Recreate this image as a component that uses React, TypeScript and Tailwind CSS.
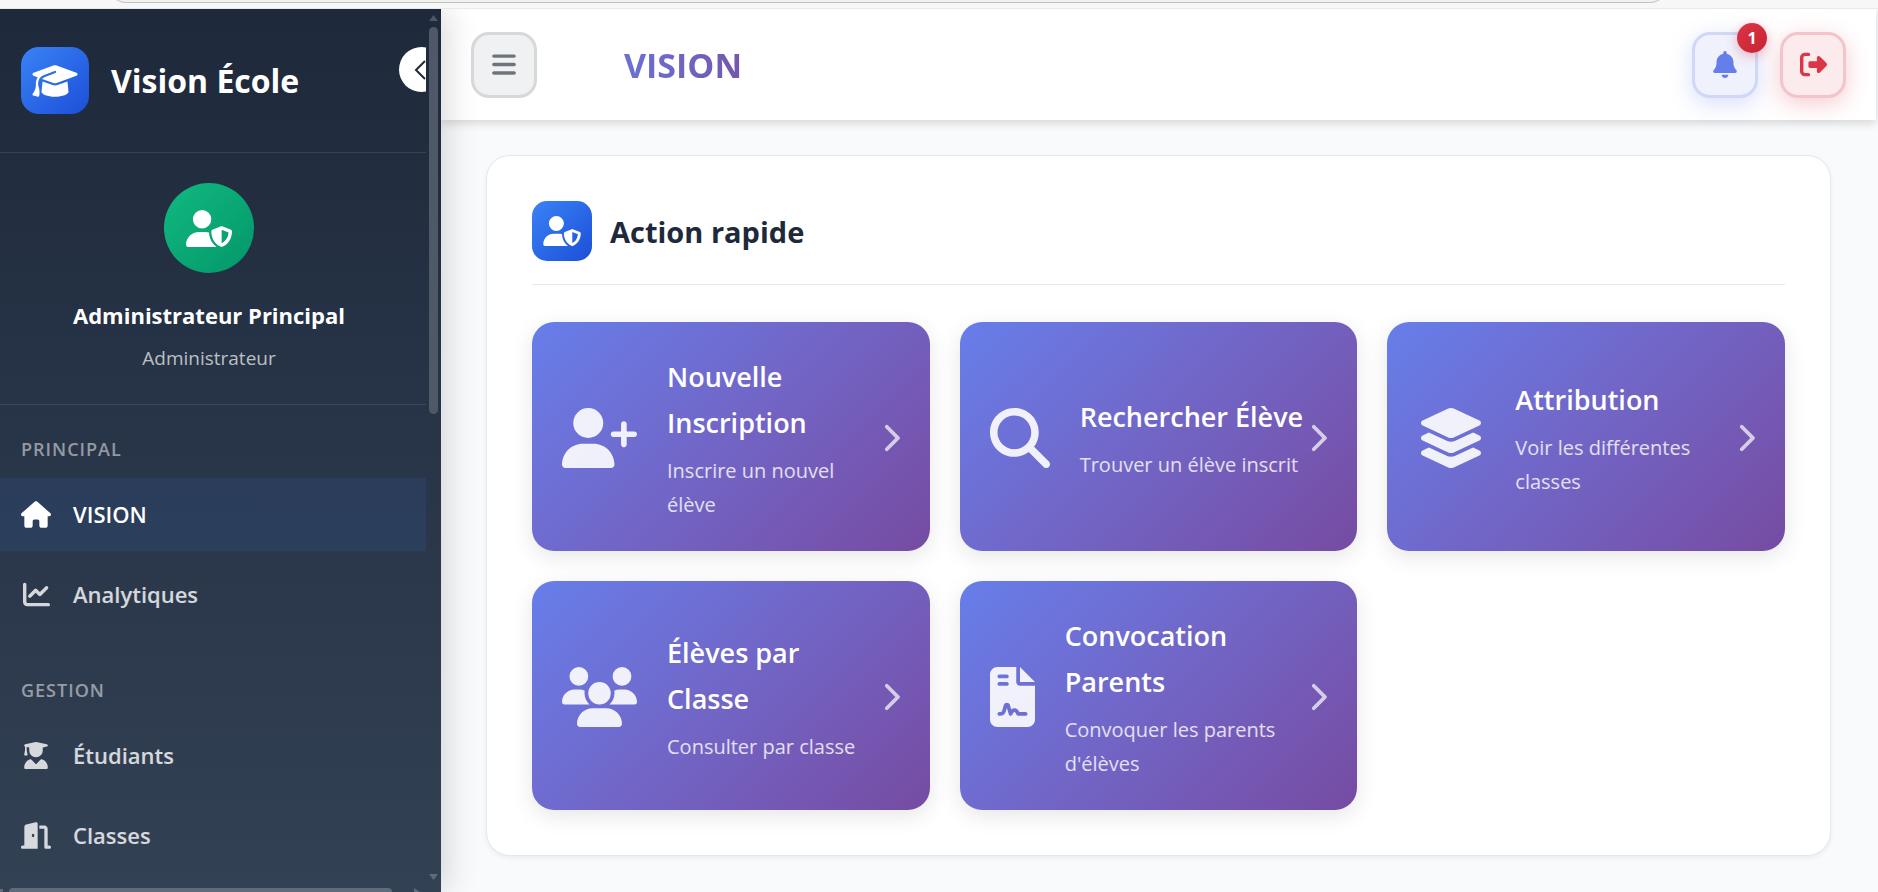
import type { IconType } from 'react-icons';
import {
  FaBars, FaBell, FaChartLine, FaChevronRight, FaDoorOpen, FaFileContract, FaGraduationCap, FaHouse,
  FaLayerGroup, FaMagnifyingGlass, FaRightFromBracket, FaUserGraduate, FaUserPlus, FaUserShield, FaUsers,
} from 'react-icons/fa6';

interface NavItem {
  label: string;
  icon: IconType;
  iconSize: string;
  active?: boolean;
}

interface NavSection {
  title: string;
  items: NavItem[];
}

interface QuickAction {
  title: string;
  description: string;
  icon: IconType;
  iconSize: string;
}

const NAV_SECTIONS: NavSection[] = [
  {
    title: 'Principal',
    items: [
      { label: 'VISION', icon: FaHouse, iconSize: 'w-[30px] h-[27px]', active: true },
      { label: 'Analytiques', icon: FaChartLine, iconSize: 'w-[27px] h-[27px]' },
    ],
  },
  {
    title: 'Gestion',
    items: [
      { label: 'Étudiants', icon: FaUserGraduate, iconSize: 'w-[24px] h-[27px]' },
      { label: 'Classes', icon: FaDoorOpen, iconSize: 'w-[30px] h-[27px]' },
    ],
  },
];

const QUICK_ACTIONS: QuickAction[] = [
  { title: 'Nouvelle Inscription', description: 'Inscrire un nouvel élève', icon: FaUserPlus, iconSize: 'w-[75px] h-[60px]' },
  { title: 'Rechercher Élève', description: 'Trouver un élève inscrit', icon: FaMagnifyingGlass, iconSize: 'w-[60px] h-[60px]' },
  { title: 'Attribution', description: 'Voir les différentes classes', icon: FaLayerGroup, iconSize: 'w-[68px] h-[60px]' },
  { title: 'Élèves par Classe', description: 'Consulter par classe', icon: FaUsers, iconSize: 'w-[75px] h-[60px]' },
  { title: 'Convocation Parents', description: "Convoquer les parents d'élèves", icon: FaFileContract, iconSize: 'w-[45px] h-[60px]' },
];

function BrowserEdge() {
  return (
    <div className="relative z-30 h-[9px] shrink-0 overflow-hidden bg-[#f7f7f7] border-b border-[#e8e9e9] pl-[108px] pr-[210px]">
      <div className="-mt-[33px] h-9 rounded-full border border-[#bfc3c0] bg-[#f0f2f0]" />
    </div>
  );
}

function SidebarScrollbars() {
  return (
    <>
      {/* Vertical */}
      <div className="absolute top-0 right-[3px] bottom-[12px] w-[9px] flex flex-col items-center pt-[6px]">
        <svg viewBox="0 0 9 6" className="w-[9px] h-[6px] fill-[#4d5766]"><path d="M4.5 0 9 6H0Z" /></svg>
        <div className="mt-[6px] h-[387px] w-full rounded-full bg-[#4e5867]" />
        <svg viewBox="0 0 9 6" className="mt-auto w-[9px] h-[6px] fill-[#5f6b7b]"><path d="M0 0H9L4.5 6Z" /></svg>
      </div>
      {/* Horizontal */}
      <div className="absolute bottom-0 left-0 w-[426px] h-[4px] flex items-end gap-[6px] overflow-hidden">
        <div className="w-[3px] h-[3px] bg-[#5f6b7b]" />
        <div className="w-[383px] h-[4px] rounded-t-[4px] bg-[#5f6b7b]" />
        <svg viewBox="0 0 6 4" className="ml-4 w-[6px] h-[4px] fill-[#5f6b7b]"><path d="M0 0 6 4H0Z" /></svg>
      </div>
    </>
  );
}

function Sidebar() {
  return (
    <aside className="relative z-20 w-[441px] shrink-0 bg-linear-to-b from-[#1e293b] to-[#334155] shadow-[6px_0_30px_rgba(0,0,0,0.15)] text-white">
      <div className="h-full w-[426px] overflow-hidden">
        <div className="relative flex items-center gap-[22px] px-[21px] py-[38px] border-b border-white/10">
          <div className="w-[68px] h-[67px] rounded-[18px] flex items-center justify-center bg-linear-to-br from-[#3b82f6] to-[#1d4ed8]">
            <FaGraduationCap className="w-[46px] h-9" />
          </div>
          <span className="text-[32px] leading-[48px] font-bold whitespace-nowrap">Vision École</span>
          <button
            type="button"
            aria-label="Réduire le menu"
            className="absolute top-[38px] -right-[18px] w-[45px] h-[45px] rounded-full bg-white flex items-center justify-center"
          >
            <svg viewBox="0 0 16 20" className="w-4 h-5 fill-none stroke-[#1e293b] stroke-2"><path d="M11 1 2 10l9 9" /></svg>
          </button>
        </div>

        <div className="flex flex-col items-center pt-[30px] pr-[8px] pb-[31px] border-b border-white/10">
          <div className="w-[90px] h-[90px] rounded-full flex items-center justify-center bg-linear-to-br from-[#10b981] to-[#059669]">
            <FaUserShield className="w-[46px] h-[37px]" />
          </div>
          <p className="mt-[21px] text-[22px] leading-[42px] font-bold">Administrateur Principal</p>
          <p className="mt-[7px] text-[19px] leading-[30px] text-white/70">Administrateur</p>
        </div>

        <nav>
          {NAV_SECTIONS.map((section) => (
            <div key={section.title} className="pt-[30px] mb-[15px]">
              <h3 className="px-[21px] mb-[15px] text-lg leading-[28px] font-semibold uppercase tracking-[1px] text-white/50">
                {section.title}
              </h3>
              <ul className="flex flex-col gap-[7px]">
                {section.items.map(({ label, icon: Icon, iconSize, active }) => (
                  <li key={label}>
                    <a
                      href="#"
                      className={`flex items-center gap-[22px] h-[73px] px-[21px] text-[22px] font-semibold ${
                        active ? 'bg-[#3b82f6]/10 text-white' : 'text-white/80'
                      }`}
                    >
                      <span className="w-[30px] flex justify-center">
                        <Icon className={iconSize} />
                      </span>
                      {label}
                    </a>
                  </li>
                ))}
              </ul>
            </div>
          ))}
        </nav>
      </div>
      <SidebarScrollbars />
    </aside>
  );
}

function Header() {
  return (
    <header className="relative z-10 h-[111px] shrink-0 flex items-center px-[30px] bg-white shadow-[0_3px_9px_rgba(0,0,0,0.15)]">
      <button
        type="button"
        aria-label="Menu"
        className="w-[66px] h-[66px] rounded-[18px] border-[3px] border-[#d6d8da] bg-[#f0f1f2] text-[#6c757d] flex items-center justify-center"
      >
        <FaBars className="w-[24px] h-[27px]" />
      </button>
      <h1 className="ml-[87px] text-[34px] leading-[54px] font-bold text-transparent bg-clip-text bg-linear-to-r from-[#6a71d3] to-[#7357ae]">
        VISION
      </h1>
      <div className="ml-auto flex gap-[22px]">
        <button
          type="button"
          aria-label="Notifications"
          className="relative w-[66px] h-[66px] rounded-[18px] border-[3px] border-[#d1d8f7] bg-[#eff1fc] text-[#667eea] flex items-center justify-center shadow-[0_6px_22px_rgba(102,126,234,0.25)]"
        >
          <FaBell className="w-[24px] h-[27px]" />
          <span className="absolute -top-3 -right-3 w-[30px] h-[30px] rounded-full flex items-center justify-center bg-linear-to-br from-[#dc3545] to-[#c82333] text-white text-base font-bold shadow-[0_3px_12px_rgba(220,53,69,0.35)]">
            1
          </span>
        </button>
        <button
          type="button"
          aria-label="Déconnexion"
          className="w-[66px] h-[66px] rounded-[18px] border-[3px] border-[#f3c5ca] bg-[#fbebec] text-[#dc3545] flex items-center justify-center shadow-[0_6px_22px_rgba(220,53,69,0.25)]"
        >
          <FaRightFromBracket className="w-[27px] h-[27px]" />
        </button>
      </div>
    </header>
  );
}

function ActionCard({ title, description, icon: Icon, iconSize }: QuickAction) {
  return (
    <a
      href="#"
      className="flex items-center min-h-[229px] pt-[31px] pb-[29px] px-[30px] rounded-[22px] text-white bg-linear-135 from-[#667eea] to-[#764ba2] shadow-[0_6px_22px_rgba(0,0,0,0.1)]"
    >
      <Icon className={`${iconSize} shrink-0 opacity-90`} />
      <div className="ml-[30px] flex-1 min-w-0">
        <h3 className="text-[27px] leading-[46px] font-semibold">{title}</h3>
        <p className="mt-2 text-[20px] leading-[34px] text-white/80">{description}</p>
      </div>
      <FaChevronRight className="w-[19px] h-[30px] shrink-0 opacity-70" />
    </a>
  );
}

export default function App() {
  return (
    <div className="h-screen flex flex-col overflow-hidden bg-[#f8fafc] font-['Open_Sans','Noto_Sans',sans-serif]">
      <BrowserEdge />
      <div className="flex-1 min-h-0 flex pr-[2px]">
        <Sidebar />
        <div className="flex-1 min-w-0 flex flex-col">
          <Header />
          <main className="flex-1 pt-[35px] px-[45px]">
            <section className="p-[45px] rounded-[24px] border border-[#e2e8f0] bg-white shadow-[0_2px_5px_rgba(0,0,0,0.06)]">
              <div className="flex items-center gap-[18px] pb-[23px] mb-[37px] border-b border-[#e2e8f0]">
                <div className="w-[60px] h-[60px] rounded-[15px] flex items-center justify-center text-white bg-linear-to-br from-[#3b82f6] to-[#1d4ed8]">
                  <FaUserShield className="w-[38px] h-[30px]" />
                </div>
                <h2 className="text-[29px] leading-[45px] font-bold text-[#1e293b]">Action rapide</h2>
              </div>
              <div className="grid grid-cols-3 gap-[30px]">
                {QUICK_ACTIONS.map((action) => (
                  <ActionCard key={action.title} {...action} />
                ))}
              </div>
            </section>
          </main>
        </div>
      </div>
    </div>
  );
}
